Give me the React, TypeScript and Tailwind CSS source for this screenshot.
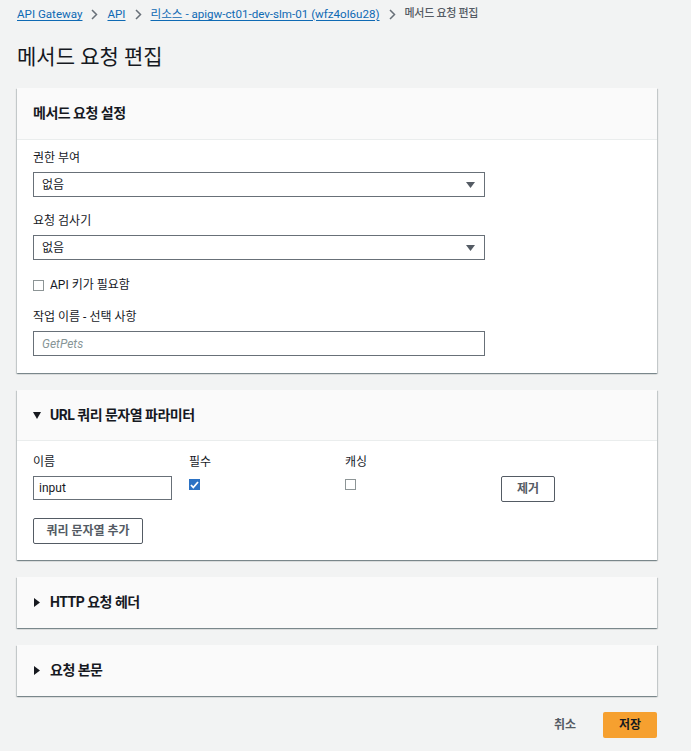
import type { ReactNode } from "react";

const cardShadow =
  "shadow-[0_1px_1px_0_rgba(0,28,36,0.3),1px_1px_1px_0_rgba(0,28,36,0.15),-1px_1px_1px_0_rgba(0,28,36,0.15)]";

function Chevron() {
  return (
    <svg width="7" height="11" viewBox="0 0 7 11" className="mx-[9px] shrink-0">
      <path d="M1 1l4.5 4.5L1 10" fill="none" stroke="#687078" strokeWidth="1.5" />
    </svg>
  );
}

function Caret({ open }: { open: boolean }) {
  return open ? (
    <svg width="8" height="7" viewBox="0 0 8 7" className="mr-[9px] shrink-0">
      <path d="M0 0h8L4 7z" fill="#16191f" />
    </svg>
  ) : (
    <svg width="6" height="9" viewBox="0 0 6 9" className="ml-[1px] mr-[10px] shrink-0">
      <path d="M0 0l6 4.5L0 9z" fill="#16191f" />
    </svg>
  );
}

function Select({ value }: { value: string }) {
  return (
    <div className="flex h-[25px] w-[452px] items-center justify-between border border-[#687078] bg-white pl-[8px] pr-[9px] text-[12px] text-[#16191f]">
      <span>{value}</span>
      <svg width="9" height="6" viewBox="0 0 9 6">
        <path d="M0 0h9L4.5 6z" fill="#545b64" />
      </svg>
    </div>
  );
}

function Checkbox({ checked = false }: { checked?: boolean }) {
  return checked ? (
    <span className="flex h-[11px] w-[11px] items-center justify-center bg-[#2b72c4]">
      <svg width="9" height="8" viewBox="0 0 9 8">
        <path d="M1 4l2.3 2.5L8 1" fill="none" stroke="white" strokeWidth="1.8" />
      </svg>
    </span>
  ) : (
    <span className="block h-[11px] w-[11px] border border-[#8d9596] bg-white" />
  );
}

function Label({ children, className = "" }: { children: ReactNode; className?: string }) {
  return (
    <div className={`mb-[5px] text-[12px] leading-[18px] text-[#16191f] ${className}`}>
      {children}
    </div>
  );
}

function OutlineButton({ children, className = "" }: { children: ReactNode; className?: string }) {
  return (
    <button
      type="button"
      className={`h-[26px] rounded-[2px] border border-[#545b64] bg-white text-[12px] font-bold text-[#545b64] ${className}`}
    >
      {children}
    </button>
  );
}

function CollapsedCard({ title }: { title: string }) {
  return (
    <section className={`mt-[17px] flex h-[51px] items-center bg-[#fafafa] pl-[16px] ${cardShadow}`}>
      <Caret open={false} />
      <h2 className="text-[14px] font-bold tracking-[-0.5px] text-[#16191f]">{title}</h2>
    </section>
  );
}

export default function App() {
  return (
    <div
      className="min-h-[751px] bg-[#f2f3f3] px-[17px] pb-[14px] text-[#16191f]"
      style={{ fontFamily: 'Roboto, "Noto Sans CJK KR", sans-serif' }}
    >
      <div className="w-[640px]">
        <nav className="flex items-center pt-[6px] text-[11.6px] leading-[16px]">
          <a className="text-[#0f6ab4] underline underline-offset-2">API Gateway</a>
          <Chevron />
          <a className="text-[#0f6ab4] underline underline-offset-2">API</a>
          <Chevron />
          <a className="text-[#0f6ab4] underline underline-offset-2">
            리소스 - apigw-ct01-dev-slm-01 (wfz4ol6u28)
          </a>
          <Chevron />
          <span className="text-[11px] font-medium tracking-[-0.3px] text-[#545b64]">메서드 요청 편집</span>
        </nav>

        <h1 className="mt-[21px] text-[21px] leading-[28px] text-[#16191f]">메서드 요청 편집</h1>

        <section className={`mt-[17px] bg-white ${cardShadow}`}>
          <div className="flex h-[52px] items-center border-b border-[#eaeded] bg-[#fafafa] px-[16px]">
            <h2 className="text-[14px] font-bold tracking-[-0.5px]">메서드 요청 설정</h2>
          </div>
          <div className="px-[16px] pb-[17px] pt-[9px]">
            <Label>권한 부여</Label>
            <Select value="없음" />

            <Label className="mt-[15px]">요청 검사기</Label>
            <Select value="없음" />

            <label className="mt-[16px] flex h-[18px] items-center gap-[6px] text-[12px]">
              <Checkbox />
              <span>API 키가 필요함</span>
            </label>

            <Label className="mt-[14px]">작업 이름 - 선택 사항</Label>
            <div className="flex h-[25px] w-[452px] items-center border border-[#687078] bg-white px-[8px] text-[12px] italic text-[#879596]">
              GetPets
            </div>
          </div>
        </section>

        <section className={`mt-[17px] bg-white ${cardShadow}`}>
          <div className="flex h-[51px] items-center border-b border-[#eaeded] bg-[#fafafa] pl-[16px]">
            <Caret open />
            <h2 className="text-[14px] font-bold tracking-[-0.5px]">URL 쿼리 문자열 파라미터</h2>
          </div>
          <div className="px-[16px] pb-[16px] pt-[12px]">
            <div className="grid grid-cols-[156px_156px_156px_auto] text-[12px]">
              <Label className="mb-[4px]">이름</Label>
              <Label className="mb-[4px]">필수</Label>
              <Label className="mb-[4px]">캐싱</Label>
              <div />
              <div className="flex h-[24px] w-[139px] items-center border border-[#687078] px-[5px] text-[12px]">
                input
              </div>
              <div className="pt-[3px]">
                <Checkbox checked />
              </div>
              <div className="pt-[3px]">
                <Checkbox />
              </div>
              <div>
                <OutlineButton className="w-[54px]">제거</OutlineButton>
              </div>
            </div>
            <OutlineButton className="mt-[16px] w-[110px]">쿼리 문자열 추가</OutlineButton>
          </div>
        </section>

        <CollapsedCard title="HTTP 요청 헤더" />
        <CollapsedCard title="요청 본문" />

        <div className="mt-[16px] flex items-center justify-end">
          <button type="button" className="mr-[7px] h-[26px] px-[20px] text-[12px] font-bold text-[#545b64]">
            취소
          </button>
          <button
            type="button"
            className="h-[26px] w-[54px] rounded-[2px] bg-[#f6a02f] text-[12px] font-bold text-[#16191f]"
          >
            저장
          </button>
        </div>
      </div>
    </div>
  );
}
